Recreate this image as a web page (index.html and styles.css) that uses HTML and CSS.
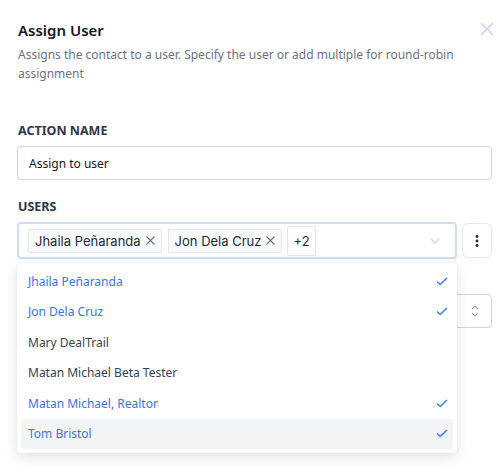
FILE: index.html
```html
<!DOCTYPE html>
<html>
<head>
<meta charset="utf-8">
<link rel="stylesheet" href="styles.css">
</head>
<body>
<div class="panel">
  <div class="header">
    <h1 class="title">Assign User</h1>
    <svg class="close" width="14" height="14" viewBox="0 0 14 14"><path d="M1 1L13 13M13 1L1 13" stroke="#c9d3f7" stroke-width="1.6" fill="none"/></svg>
  </div>
  <p class="desc">Assigns the contact to a user. Specify the user or add multiple for round-robin assignment</p>

  <div class="field action">
    <div class="label">ACTION NAME</div>
    <div class="input">Assign to user</div>
  </div>

  <div class="field users">
    <div class="label">USERS</div>
    <div class="select-row">
      <div class="select">
        <span class="tag">Jhaila Peñaranda <svg class="x" width="9" height="9" viewBox="0 0 9 9"><path d="M0.5 0.5L8.5 8.5M8.5 0.5L0.5 8.5" stroke="#6b7280" stroke-width="1.1"/></svg></span>
        <span class="tag">Jon Dela Cruz <svg class="x" width="9" height="9" viewBox="0 0 9 9"><path d="M0.5 0.5L8.5 8.5M8.5 0.5L0.5 8.5" stroke="#6b7280" stroke-width="1.1"/></svg></span>
        <span class="more">+2</span>
        <svg class="chev" width="10" height="6" viewBox="0 0 10 6"><path d="M1 1L5 5L9 1" stroke="#d1d5db" stroke-width="1.2" fill="none"/></svg>
      </div>
      <div class="kebab">
        <svg width="4" height="14" viewBox="0 0 4 14"><circle cx="2" cy="2.5" r="1.4" fill="#1f2937"/><circle cx="2" cy="7" r="1.4" fill="#1f2937"/><circle cx="2" cy="11.5" r="1.4" fill="#1f2937"/></svg>
      </div>
      <ul class="dropdown">
        <li class="sel">Jhaila Peñaranda <svg class="chk" width="12" height="9" viewBox="0 0 12 9"><path d="M1 4.5L4.2 7.5L11 1" stroke="#3b82f6" stroke-width="1.6" fill="none"/></svg></li>
        <li class="sel">Jon Dela Cruz <svg class="chk" width="12" height="9" viewBox="0 0 12 9"><path d="M1 4.5L4.2 7.5L11 1" stroke="#3b82f6" stroke-width="1.6" fill="none"/></svg></li>
        <li>Mary DealTrail</li>
        <li>Matan Michael Beta Tester</li>
        <li class="sel">Matan Michael, Realtor <svg class="chk" width="12" height="9" viewBox="0 0 12 9"><path d="M1 4.5L4.2 7.5L11 1" stroke="#3b82f6" stroke-width="1.6" fill="none"/></svg></li>
        <li class="sel active">Tom Bristol <svg class="chk" width="12" height="9" viewBox="0 0 12 9"><path d="M1 4.5L4.2 7.5L11 1" stroke="#3b82f6" stroke-width="1.6" fill="none"/></svg></li>
      </ul>
    </div>
  </div>

  <div class="field method">
    <div class="input sel2">
      <svg width="8" height="12" viewBox="0 0 8 12"><path d="M1 4L4 1L7 4M1 8L4 11L7 8" stroke="#9ca3af" stroke-width="1.1" fill="none"/></svg>
    </div>
  </div>
</div>
</body>
</html>
```

FILE: styles.css
```css
* { box-sizing: border-box; }
html, body { min-height: 472px; }
body {
  margin: 0;
  background: #fff;
  font-family: "Noto Sans", "Open Sans", sans-serif;
  color: #1f2937;
}
.panel {
  padding: 18px 12px 0 17px;
  min-height: 472px;
}
.header {
  display: flex;
  justify-content: space-between;
  align-items: flex-start;
}
.title {
  margin: 0 0 0 1px;
  font-size: 15px;
  font-weight: 600;
  line-height: 24px;
  color: #111827;
}
.close { margin-top: 4px; margin-right: -2px; }
.desc {
  margin: 3px 0 0 1px;
  font-size: 12px;
  line-height: 19px;
  color: #6b7280;
}
.label {
  font-size: 12.5px;
  font-weight: 700;
  color: #2d3748;
  line-height: 18px;
  margin-left: 1px;
}
.action { margin-top: 39px; }
.action .label { margin-bottom: 6px; }
.input {
  height: 34px;
  border: 1px solid #d1d5db;
  border-radius: 4px;
  padding: 0 11px;
  display: flex;
  align-items: center;
  font-size: 12px;
  color: #111827;
}
.users { margin-top: 18px; }
.users .label { margin-bottom: 6px; }
.select-row {
  position: relative;
  display: flex;
  gap: 5px;
}
.select {
  flex: 1;
  height: 37px;
  border: 2px solid #cfdcf7;
  border-radius: 4px;
  display: flex;
  align-items: center;
  gap: 6px;
  padding: 0 9px;
  font-family: Inter, "Noto Sans", sans-serif;
}
.tag {
  display: inline-flex;
  align-items: center;
  gap: 4px;
  height: 24px;
  padding: 0 6px;
  border: 1px solid #e5e7eb;
  background: #f9fafb;
  border-radius: 2px;
  font-size: 13px;
  color: #1f2937;
}
.x { margin-left: 1px; }
.more {
  display: inline-flex;
  align-items: center;
  height: 30px;
  padding: 0 5px;
  margin-left: -1px;
  border: 1px solid #e5e7eb;
  border-radius: 2px;
  font-size: 13px;
  color: #1f2937;
}
.chev { margin-left: auto; margin-right: 6px; }
.kebab {
  width: 30px;
  height: 35px;
  margin-top: 1px;
  border: 1px solid #e5e7eb;
  border-radius: 6px;
  display: flex;
  align-items: center;
  justify-content: center;
}
.dropdown {
  position: absolute;
  z-index: 5;
  top: 41px;
  left: 0;
  width: 440px;
  margin: 0;
  padding: 3px 4px 4px;
  list-style: none;
  background: #fff;
  border-radius: 4px;
  box-shadow: 0 4px 14px rgba(0,0,0,0.12), 0 0 2px rgba(0,0,0,0.06);
}
.dropdown li {
  height: 30.5px;
  display: flex;
  align-items: center;
  justify-content: space-between;
  padding: 0 5px 0 7px;
  font-size: 12px;
  color: #374151;
  border-radius: 4px;
}
.dropdown li.sel { color: #3b74e8; }
.dropdown li.active { background: #f3f4f6; }
.method { margin-top: 35px; }
.sel2 { justify-content: flex-end; padding-right: 12px; }
```
